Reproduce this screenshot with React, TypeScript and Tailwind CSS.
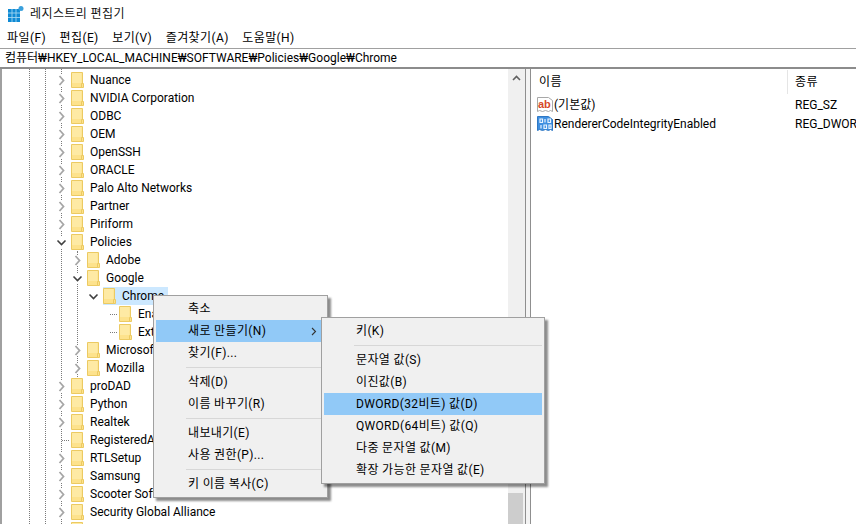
const FONT = "font-['Roboto','Noto_Sans_CJK_KR',sans-serif]"

type Row = { name: string; depth: number; state?: 'closed' | 'open' | 'leaf'; selected?: boolean }

const rows: Row[] = [
  { name: 'Nuance', depth: 0 },
  { name: 'NVIDIA Corporation', depth: 0 },
  { name: 'ODBC', depth: 0 },
  { name: 'OEM', depth: 0 },
  { name: 'OpenSSH', depth: 0 },
  { name: 'ORACLE', depth: 0 },
  { name: 'Palo Alto Networks', depth: 0 },
  { name: 'Partner', depth: 0 },
  { name: 'Piriform', depth: 0 },
  { name: 'Policies', depth: 0, state: 'open' },
  { name: 'Adobe', depth: 1 },
  { name: 'Google', depth: 1, state: 'open' },
  { name: 'Chrome', depth: 2, state: 'open', selected: true },
  { name: 'Enabled', depth: 3, state: 'leaf' },
  { name: 'Extensions', depth: 3, state: 'leaf' },
  { name: 'Microsoft', depth: 1 },
  { name: 'Mozilla', depth: 1 },
  { name: 'proDAD', depth: 0 },
  { name: 'Python', depth: 0 },
  { name: 'Realtek', depth: 0 },
  { name: 'RegisteredApplications', depth: 0, state: 'leaf' },
  { name: 'RTLSetup', depth: 0 },
  { name: 'Samsung', depth: 0 },
  { name: 'Scooter Software', depth: 0 },
  { name: 'Security Global Alliance', depth: 0 },
  { name: '', depth: 0 },
]

function Folder() {
  return (
    <svg width="13" height="16" viewBox="0 0 13 16" className="shrink-0">
      <path d="M.5.5h11v15H.5z" fill="#fde28c" stroke="#ecca62" />
      <path d="M1 1h9.500v10H1z" fill="#fff0b8" opacity=".55" />
      <path d="M10.500 11.500h2v4h-2z" fill="#fde28c" stroke="#ecca62" />
    </svg>
  )
}

function Chevron({ open }: { open?: boolean }) {
  return (
    <svg width="11" height="11" viewBox="0 0 11 11" className="shrink-0 bg-white">
      {open ? (
        <path d="M1.500 3.500 5.500 7.500 9.500 3.500" fill="none" stroke="#404040" strokeWidth="1.600" />
      ) : (
        <path d="M3.500 1 7.500 5.500 3.500 10" fill="none" stroke="#a6a6a6" strokeWidth="1.800" />
      )}
    </svg>
  )
}

function Guide({ className }: { className: string }) {
  return <div className={`absolute w-px border-l border-dotted border-[#7a7a7a] ${className}`} />
}

function TreeRow({ row }: { row: Row }) {
  const pad = ['pl-[55px]', 'pl-[71px]', 'pl-[87px]', 'pl-[103px]'][row.depth]
  return (
    <div className={`flex h-[18px] items-center ${pad}`}>
      <div className="flex w-3 shrink-0 items-center justify-center">
        {row.state === 'leaf' ? (
          <div className="ml-2 w-[7px] shrink-0 border-t border-dotted border-[#7a7a7a]" />
        ) : (
          <Chevron open={row.state === 'open'} />
        )}
      </div>
      <div className={`ml-[4px] flex h-[18px] items-center ${row.selected ? 'bg-[#cce8ff] pr-1' : ''}`}>
        <div className="flex w-[19px] items-center">
          <Folder />
        </div>
        <span className="whitespace-nowrap text-xs text-black">{row.name}</span>
      </div>
    </div>
  )
}

function MenuItem({ label, active, arrow }: { label: string; active?: boolean; arrow?: boolean }) {
  return (
    <div className={`mx-0.5 flex h-[22px] items-center justify-between pl-[32px] pr-2 text-xs tracking-[.35px] text-black ${active ? 'bg-[#91c9f7]' : ''}`}>
      <span className="whitespace-nowrap">{label}</span>
      {arrow && (
        <svg width="6" height="9" viewBox="0 0 6 9">
          <path d="M1 1 4.500 4.500 1 8" fill="none" stroke="#333" strokeWidth="1.100" />
        </svg>
      )}
    </div>
  )
}

function MenuLine() {
  return <div className="my-[3px] ml-[32px] mr-0.5 h-px bg-[#d7d7d7]" />
}

function RegIcon({ kind }: { kind: 'ab' | 'bin' }) {
  return (
    <svg width="16" height="16" viewBox="0 0 16 16" className="shrink-0">
      <path
        d="M.5.5h11l4 3v11l-2-1-2 1-3-1-3 1-3-1-2 1z"
        fill={kind === 'ab' ? '#fff' : '#3f8fe0'}
        stroke={kind === 'ab' ? '#a8a8a8' : '#2f78c4'}
      />
      {kind === 'ab' ? (
        <text x="1" y="10.500" fontSize="11" fontWeight="700" fill="#d8482a" fontFamily="Liberation Sans, sans-serif">ab</text>
      ) : (
        <path d="M3 3h2.500v3.500H3zM8 3v3.500M11 3h2.500v3.500H11zM4 9v3.500M7 9h2.500v3.500H7zM12 9h2v3.500h-2z" fill="none" stroke="#e8f3ff" strokeWidth="1.200" />
      )}
    </svg>
  )
}

export default function App() {
  return (
    <div className={`flex h-[524px] w-[856px] flex-col overflow-hidden bg-white ${FONT}`}>
      {/* title bar */}
      <div className="flex h-7 shrink-0 items-center pl-2">
        <svg width="16" height="16" viewBox="0 0 16 16" className="shrink-0">
          <path d="M0 3h12v13H0z" fill="#0f8ad4" />
          <path d="M4 3v13M8 3v13M0 7h12M0 11.500h12" stroke="#9fd6f2" strokeWidth=".9" />
          <circle cx="13" cy="2.500" r="2.500" fill="#3aa0dc" />
        </svg>
        <span className="ml-1.5 text-xs tracking-[.4px] text-[#111]">레지스트리 편집기</span>
      </div>

      {/* menu bar */}
      <div className="flex h-5 shrink-0 items-center gap-[13.5px] pl-[7px] text-xs tracking-[.4px] text-black">
        <span>파일(F)</span>
        <span>편집(E)</span>
        <span>보기(V)</span>
        <span>즐겨찾기(A)</span>
        <span>도움말(H)</span>
      </div>

      {/* address bar */}
      <div className="flex h-[21px] shrink-0 items-center overflow-hidden whitespace-nowrap border-t border-b-2 border-t-[#a0a0a0] border-b-[#8c8c8c] pl-[5px] text-xs text-black">
        컴퓨터₩HKEY_LOCAL_MACHINE₩SOFTWARE₩Policies₩Google₩Chrome
      </div>

      <div className="relative flex min-h-0 flex-1">
        {/* tree pane */}
        <div className="relative w-[508px] shrink-0 overflow-hidden border-l-2 border-[#a0a0a0] pt-[2px]">
          <Guide className="left-[27px] top-0 h-full" />
          <Guide className="left-[43px] top-0 h-full" />
          <Guide className="left-[59px] top-0 h-full" />
          <Guide className="left-[75px] top-[182px] h-[126px]" />
          <div className="relative -ml-0.5">
            {rows.map((r, i) => (
              <TreeRow key={i} row={r} />
            ))}
          </div>
        </div>

        {/* tree scrollbar */}
        <div className="flex w-[17px] shrink-0 flex-col justify-between bg-[#f0f0f0]">
          <div className="flex h-[17px] items-center justify-center">
            <svg width="9" height="6" viewBox="0 0 9 6">
              <path d="M1 5 4.500 1.500 8 5" fill="none" stroke="#606060" strokeWidth="1.600" />
            </svg>
          </div>
          <div className="mr-0.5 h-[31px] bg-[#cdcdcd]" />
        </div>

        {/* splitter */}
        <div className="w-[6px] shrink-0 border-x border-[#8f8f8f] bg-[#f4f4f4]" />

        {/* value list */}
        <div className="min-w-0 flex-1 overflow-hidden text-xs text-black">
          <div className="flex h-[26px] items-center">
            <div className="flex h-[24px] w-[257px] shrink-0 items-center border-r border-[#e5e5e5] pl-[8px] tracking-[.5px]">이름</div>
            <div className="pl-[7px] tracking-[.5px]">종류</div>
          </div>
          <div className="flex h-[19px] items-center pl-[6px]">
            <RegIcon kind="ab" />
            <span className="ml-[1px] w-[241px] shrink-0">(기본값)</span>
            <span>REG_SZ</span>
          </div>
          <div className="flex h-[19px] items-center whitespace-nowrap pl-[6px]">
            <RegIcon kind="bin" />
            <span className="ml-[1px] w-[241px] shrink-0">RendererCodeIntegrityEnabled</span>
            <span>REG_DWORD</span>
          </div>
        </div>
      </div>

      {/* context menu */}
      <div className="absolute left-[153px] top-[295px] h-[203px] w-[175px] border border-[#a0a0a0] bg-[#f0f0f0] py-0.5 shadow-[3px_3px_2px_rgba(0,0,0,.45)]">
        <MenuItem label="축소" />
        <MenuItem label="새로 만들기(N)" active arrow />
        <MenuItem label="찾기(F)..." />
        <MenuLine />
        <MenuItem label="삭제(D)" />
        <MenuItem label="이름 바꾸기(R)" />
        <MenuLine />
        <MenuItem label="내보내기(E)" />
        <MenuItem label="사용 권한(P)..." />
        <MenuLine />
        <MenuItem label="키 이름 복사(C)" />
      </div>

      {/* submenu */}
      <div className="absolute left-[321px] top-[317px] h-[167px] w-[224px] border border-[#a0a0a0] bg-[#f0f0f0] py-0.5 shadow-[3px_3px_2px_rgba(0,0,0,.45)]">
        <MenuItem label="키(K)" />
        <MenuLine />
        <MenuItem label="문자열 값(S)" />
        <MenuItem label="이진값(B)" />
        <MenuItem label="DWORD(32비트) 값(D)" active />
        <MenuItem label="QWORD(64비트) 값(Q)" />
        <MenuItem label="다중 문자열 값(M)" />
        <MenuItem label="확장 가능한 문자열 값(E)" />
      </div>
    </div>
  )
}
